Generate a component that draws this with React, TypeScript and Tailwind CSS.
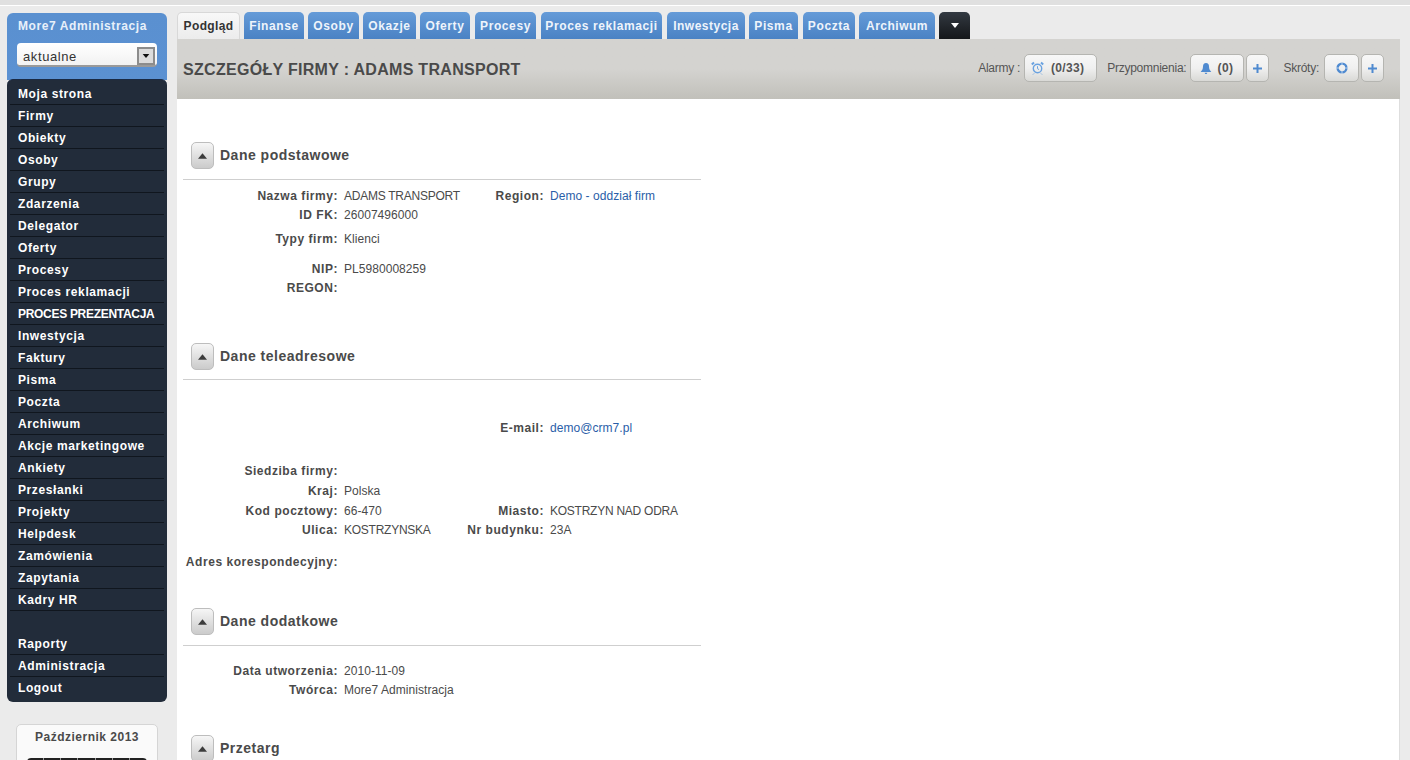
import React from "react";

const menu = ["Moja strona","Firmy","Obiekty","Osoby","Grupy","Zdarzenia","Delegator","Oferty","Procesy","Proces reklamacji","PROCES PREZENTACJA","Inwestycja","Faktury","Pisma","Poczta","Archiwum","Akcje marketingowe","Ankiety","Przesłanki","Projekty","Helpdesk","Zamówienia","Zapytania","Kadry HR","","Raporty","Administracja","Logout"];

const tabs: [string, string][] = [
  ["Finanse", "w-[60px]"],["Osoby", "w-[51px]"],["Okazje", "w-[53px]"],["Oferty", "w-[50px]"],["Procesy", "w-[61px] ml-[1px]"],["Proces reklamacji", "w-[121px] ml-[1px]"],["Inwestycja", "w-[78px] ml-[1px]"],["Pisma", "w-[49px]"],["Poczta", "w-[52px] ml-[1px]"],["Archiwum", "w-[76px]"],
];

function Tri({ up = false, cls = "" }: { up?: boolean; cls?: string }) {
  return (
    <svg width="10" height="6" viewBox="0 0 10 6" className={cls}>
      <path d={up ? "M5 0 L10 6 L0 6 Z" : "M0 0 L10 0 L5 6 Z"} fill="currentColor" />
    </svg>
  );
}

function Section({ title, cls, hr = true }: { title: string; cls: string; hr?: boolean }) {
  return (
    <div className={`${cls} ${hr ? "border-b border-[#cfcfcf]" : ""} w-[518px] flex items-start`}>
      <div className="ml-[8px] w-[23px] h-[27px] rounded-[5px] border border-[#bdbdbd] bg-gradient-to-b from-[#f6f6f6] to-[#cbcbcb] flex items-center justify-center text-[#3c3c3c]">
        <Tri up cls="w-[9px] h-[6px]" />
      </div>
      <span className="ml-[6px] mt-[3px] text-[14px] leading-[20px] font-bold text-[#4a4a4a] tracking-[0.5px] whitespace-nowrap">{title}</span>
    </div>
  );
}

function valueTrack(v?: string) {
  if (!v) return "";
  return /^[A-Z ]+$/.test(v) ? "tracking-[-0.25px]" : /\d-?\d/.test(v) ? "tracking-[0.05px]" : "tracking-[0.05px]";
}

function Row({ h, label, value, label2, value2, link2, top = "" }: { h: string; label?: string; value?: string; label2?: string; value2?: string; link2?: boolean; top?: string }) {
  return (
    <div className={`${h} ${top} flex items-center text-[12px]`}>
      <div className="w-[155px] flex justify-end font-bold text-[#4a4a4a] tracking-[0.55px] whitespace-nowrap">{label}</div>
      <div className={`ml-[6px] w-[135px] text-[#4a4a4a] whitespace-nowrap ${valueTrack(value)}`}>{value}</div>
      <div className="w-[65px] flex justify-end font-bold text-[#4a4a4a] tracking-[0.55px] whitespace-nowrap">{label2}</div>
      <div className={`ml-[6px] whitespace-nowrap ${valueTrack(value2)} ${link2 ? "text-[#2a5ea8]" : "text-[#4a4a4a]"}`}>{value2}</div>
    </div>
  );
}

function SmallBtn({ children, w }: { children: React.ReactNode; w: string }) {
  return (
    <div className={`${w} h-[28px] rounded-[5px] border border-[#b5b5b1] bg-gradient-to-b from-[#f7f7f7] via-[#f0f0f0] to-[#d9d9d6] flex items-center justify-center text-[12px] font-bold text-[#555] tracking-[0.35px]`}>
      {children}
    </div>
  );
}

const Plus = () => (
  <svg width="9" height="9" viewBox="0 0 9 9" className="text-[#4f8ad0]"><path d="M3.5 0h2v3.5H9v2H5.5V9h-2V5.5H0v-2h3.5z" fill="currentColor" /></svg>
);

export default function App() {
  return (
    <div className="h-[760px] overflow-hidden bg-[#ebebeb] font-['Liberation_Sans',Arial,sans-serif]">
      <div className="h-[5px] bg-[#e0e0e0]" />
      <div className="h-[1px] bg-white" />
      <div className="flex items-start pt-[6px]">
        <aside className="ml-[7px] mt-[1px] w-[160px] shrink-0">
          <div className="h-[67px] rounded-t-[6px] bg-gradient-to-b from-[#5a90d0] to-[#5b91d2] pt-[5px] pl-[11px]">
            <div className="text-[12px] leading-[16px] font-bold text-[#e8f0fa] tracking-[0.6px] whitespace-nowrap">More7 Administracja</div>
            <div className="-ml-[1px] mr-[10px] mt-[9px] h-[24px] rounded-[4px] bg-gradient-to-b from-white to-[#f2f2f2] border-b-2 border-[#9a9a9a] flex items-start pl-[6px] pr-[2px] justify-between">
              <span className="text-[13px] leading-[16px] text-[#333] tracking-[0.6px] pt-[6px]">aktualne</span>
              <span className="w-[18px] h-[18px] mt-[4px] border-2 border-[#8c8c8c] bg-[#dcdcdc] flex items-center justify-center text-[#111]">
                <Tri cls="w-[8px] h-[4px]" />
              </span>
            </div>
          </div>
          <nav className="-mt-[1px] rounded-[6px] bg-[#222c3a] pt-[3px] pb-[3px] px-[3px] border-t border-[#1a2a44]">
            {menu.map((m, i) => (
              <div key={i} className={`h-[22px] pl-[8px] flex items-center text-[12px] font-bold text-white whitespace-nowrap ${m === "PROCES PREZENTACJA" ? "tracking-[-0.3px]" : "tracking-[0.6px]"} ${i < menu.length - 1 && i !== 24 ? "border-b border-[#10161e]" : ""}`}>{m}</div>
            ))}
          </nav>
          <div className="mx-[9px] mt-[22px] h-[60px] rounded-[5px] border border-[#d5d5d5] bg-[#fafafa] pt-[3px]">
            <div className="text-center text-[12px] font-bold text-[#4a4a4a] tracking-[0.5px]">Październik 2013</div>
            <div className="mx-[10px] mt-[12px] h-[20px] rounded-[4px] bg-[#222] grid grid-cols-7 divide-x divide-[#999]">
              {[0, 1, 2, 3, 4, 5, 6].map((c) => <div key={c} />)}
            </div>
          </div>
        </aside>
        <main className="ml-[9px] flex-1 mr-[10px] min-w-0">
          <div className="h-[27px] flex items-end gap-[4px] ml-[1px]">
            <div className="w-[63px] h-[27px] rounded-t-[5px] border border-b-0 border-[#d8d8d8] bg-gradient-to-b from-[#f8f8f8] to-[#ececec] flex items-center justify-center text-[12px] font-bold text-[#333] tracking-[0.35px]">Podgląd</div>
            {tabs.map(([t, w]) => (
              <div key={t} className={`${w} h-[27px] rounded-t-[5px] bg-gradient-to-b from-[#659bd8] to-[#4a82c4] flex items-center justify-center text-[12px] font-bold text-[#eef4fb] whitespace-nowrap ${t === "Inwestycja" || t === "Archiwum" ? "tracking-[0.5px]" : "tracking-[0.6px]"}`}>{t}</div>
            ))}
            <div className="w-[31px] h-[27px] rounded-t-[5px] bg-gradient-to-b from-[#333a42] to-[#15171a] flex items-center justify-center text-white">
              <Tri cls="w-[8px] h-[5px]" />
            </div>
          </div>
          <div className="ml-[1px] h-[60px] bg-gradient-to-b from-[#d4d3d0] via-[#d4d3d0] to-[#c1c0ba] flex items-center pl-[6px] pr-[16px]">
            <h1 className="text-[16px] font-bold text-[#4a4a4a] tracking-[0.3px] whitespace-nowrap pt-[2px]">SZCZEGÓŁY FIRMY : ADAMS TRANSPORT</h1>
            <div className="ml-auto flex items-center text-[12px] text-[#555] tracking-[-0.25px] pb-[2px]">
              <span>Alarmy :</span>
              <div className="ml-[4px]"><SmallBtn w="w-[73px]">
                <div className="flex items-center pr-[6px]">
                  <svg width="13" height="14" viewBox="0 0 13 14" className="text-[#6aa2e0] mr-[7px]" fill="none" stroke="currentColor"><circle cx="6.5" cy="7.5" r="4.2" strokeWidth="1.4" /><path d="M6.5 5.2V7.6L8 8.6" strokeWidth="1" /><path d="M0.8 3.6 L3 1.6 M12.2 3.6 L10 1.6" strokeWidth="2" /><path d="M3 12.5 L2 13.5 M10 12.5 L11 13.5" strokeWidth="1" /></svg>
                  <span>(0/33)</span>
                </div></SmallBtn></div>
              <span className="ml-[10px]">Przypomnienia:</span>
              <div className="ml-[4px]"><SmallBtn w="w-[54px]">
                <div className="flex items-center pr-[2px]">
                  <svg width="12" height="13" viewBox="0 0 12 13" className="text-[#4f8ad0] mr-[6px]"><path d="M6 1 C4 1 3 2.5 3 4.5 C3 7 2 8.5 0.7 10 L11.3 10 C10 8.5 9 7 9 4.5 C9 2.5 8 1 6 1 Z M4.7 10.8 L7.3 10.8 C7.2 11.6 6.7 12 6 12 C5.3 12 4.8 11.6 4.7 10.8 Z" fill="currentColor" /></svg>
                  <span>(0)</span>
                </div></SmallBtn></div>
              <div className="ml-[2px]"><SmallBtn w="w-[23px]"><Plus /></SmallBtn></div>
              <span className="ml-[14px]">Skróty:</span>
              <div className="ml-[5px]"><SmallBtn w="w-[35px]">
                <svg width="12" height="12" viewBox="0 0 12 12" className="text-[#4f8ad0]"><circle cx="6" cy="6" r="4.4" fill="none" stroke="currentColor" strokeWidth="2.4" /><path d="M6 0v3M6 9v3M0 6h3M9 6h3" stroke="#cfe0f3" strokeWidth="0.8" /></svg>
              </SmallBtn></div>
              <div className="ml-[2px]"><SmallBtn w="w-[23px]"><Plus /></SmallBtn></div>
            </div>
          </div>
          <div className="ml-[1px] h-[661px] bg-white pl-[6px] pt-[43px] border-r border-[#dedede]">
            <Section title="Dane podstawowe" cls="h-[38px]" />
            <Row h="h-[19px]" top="mt-[6px]" label="Nazwa firmy:" value="ADAMS TRANSPORT" label2="Region:" value2="Demo - oddział firm" link2 />
            <Row h="h-[19px]" label="ID FK:" value="26007496000" />
            <Row h="h-[20px]" top="mt-[5px]" label="Typy firm:" value="Klienci" />
            <Row h="h-[19px]" top="mt-[10px]" label="NIP:" value="PL5980008259" />
            <Row h="h-[19px]" label="REGON:" />
            <Section title="Dane teleadresowe" cls="mt-[46px] h-[37px]" />
            <Row h="h-[20px]" top="mt-[38px]" label2="E-mail:" value2="demo@crm7.pl" link2 />
            <Row h="h-[20px]" top="mt-[23px]" label="Siedziba firmy:" />
            <Row h="h-[20px]" label="Kraj:" value="Polska" />
            <Row h="h-[19px]" label="Kod pocztowy:" value="66-470" label2="Miasto:" value2="KOSTRZYN NAD ODRA" />
            <Row h="h-[19px]" label="Ulica:" value="KOSTRZYNSKA" label2="Nr budynku:" value2="23A" />
            <Row h="h-[20px]" top="mt-[13px]" label="Adres korespondecyjny:" />
            <Section title="Dane dodatkowe" cls="mt-[36px] h-[38px]" />
            <Row h="h-[19px]" top="mt-[15px]" label="Data utworzenia:" value="2010-11-09" />
            <Row h="h-[19px]" label="Twórca:" value="More7 Administracja" />
            <Section title="Przetarg" cls="mt-[36px] h-[38px]" hr={false} />
          </div>
        </main>
      </div>
    </div>
  );
}
